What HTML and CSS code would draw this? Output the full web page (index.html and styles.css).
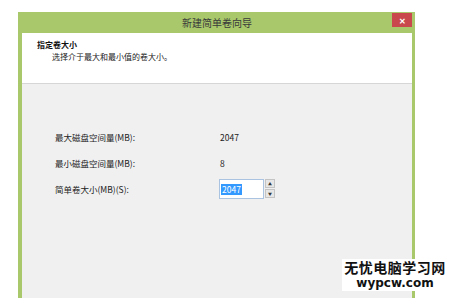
FILE: index.html
```html
<!DOCTYPE html>
<html lang="zh-CN">
<head>
    <meta charset="UTF-8">
    <meta name="viewport" content="width=device-width, initial-scale=1.0">
    <title>新建简单卷向导</title>
    <link rel="stylesheet" href="styles.css">
</head>
<body>
    <div class="window">
        <div class="titlebar">
            <span class="title">新建简单卷向导</span>
            <span class="close">&#x2715;</span>
        </div>
        <div class="header">
            <div class="heading">指定卷大小</div>
            <div class="subheading">选择介于最大和最小值的卷大小。</div>
        </div>
        <div class="body">
            <div class="row">
                <span class="label">最大磁盘空间量(MB):</span>
                <span class="value">2047</span>
            </div>
            <div class="row">
                <span class="label">最小磁盘空间量(MB):</span>
                <span class="value">8</span>
            </div>
            <div class="row">
                <span class="label">简单卷大小(MB)(S):</span>
                <div class="spin">
                    <div class="spin-field"><span class="selected">2047</span></div>
                    <div class="spin-buttons">
                        <span class="spin-btn">&#9650;</span>
                        <span class="spin-btn">&#9660;</span>
                    </div>
                </div>
            </div>
        </div>
    </div>

    <div class="watermark">
        <div class="wm-cn">无忧电脑学习网</div>
        <div class="wm-en">wypcw.com</div>
    </div>
</body>
</html>
```

FILE: styles.css
```css
body {
    margin: 0;
    width: 456px;
    height: 298px;
    overflow: hidden;
    background: #ffffff;
    font-family: "Noto Sans CJK SC", "Liberation Sans", sans-serif;
    position: relative;
}

.window {
    margin: 12px 0 0 18px;
    width: 390px;
    height: 286px;
    border-left: 4px solid #a8c86b;
    border-right: 3px solid #a8c86b;
    display: flex;
    flex-direction: column;
}

.titlebar {
    height: 21px;
    background: #a8c86b;
    display: flex;
    align-items: center;
    justify-content: center;
    position: relative;
}

.title {
    font-size: 10px;
    color: #3a3a3a;
}

.close {
    position: absolute;
    right: 0;
    top: 1px;
    width: 20px;
    height: 14px;
    background: #c8484d;
    color: #ffffff;
    font-size: 8px;
    font-weight: bold;
    display: flex;
    align-items: center;
    justify-content: center;
}

.header {
    height: 51px;
    background: #ffffff;
    border-bottom: 1px solid #d6d6d6;
    padding: 6px 0 0 15px;
    box-sizing: border-box;
}

.heading {
    font-size: 8px;
    font-weight: bold;
    color: #111111;
    line-height: 12px;
}

.subheading {
    font-size: 8px;
    color: #222222;
    line-height: 12px;
    padding-left: 15px;
}

.body {
    flex: 1;
    background: #f0f0f0;
    padding: 47px 0 0 33px;
    display: flex;
    flex-direction: column;
    gap: 14px;
}

.row {
    display: flex;
    align-items: center;
    height: 12px;
    font-size: 8.5px;
    color: #222222;
}

.label {
    width: 165px;
}

.spin {
    display: flex;
    margin-left: -1px;
}

.spin-field {
    width: 42px;
    height: 18px;
    border: 1px solid #a9c3e0;
    background: #ffffff;
    display: flex;
    align-items: center;
    padding-left: 1px;
}

.selected {
    background: #3399ff;
    color: #ffffff;
    line-height: 11px;
    padding: 0 1px;
}

.spin-buttons {
    display: flex;
    flex-direction: column;
    margin-left: 1px;
    gap: 1px;
}

.spin-btn {
    width: 10px;
    height: 9px;
    background: #e6e6e6;
    border: 1px solid #c4c4c4;
    box-sizing: border-box;
    font-size: 4px;
    color: #333333;
    display: flex;
    align-items: center;
    justify-content: center;
}

.watermark {
    position: absolute;
    left: 342px;
    top: 259px;
    width: 106px;
    height: 32px;
    background: #ffffff;
    text-align: center;
    color: #111111;
    font-weight: bold;
}

.wm-cn {
    font-size: 14px;
    line-height: 17px;
    letter-spacing: 0.5px;
}

.wm-en {
    font-family: "DejaVu Sans", sans-serif;
    font-size: 12px;
    line-height: 14px;
}
```
